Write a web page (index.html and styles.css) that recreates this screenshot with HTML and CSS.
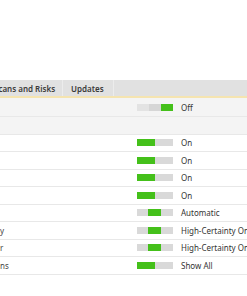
FILE: index.html
```html
<!DOCTYPE html>
<html lang="en">
<head>
    <meta charset="UTF-8">
    <meta name="viewport" content="width=device-width, initial-scale=1.0">
    <title>Settings</title>
    <link rel="stylesheet" href="styles.css">
</head>
<body>
    <div class="top-space"></div>

    <div class="tabs">
        <div class="tab tab-first">Scans and Risks</div>
        <div class="tab">Updates</div>
        <div class="tab-rest"></div>
    </div>

    <div class="list">
        <div class="row row-shaded">
            <div class="label"></div>
            <div class="switch">
                <span class="seg seg-light"></span>
                <span class="seg seg-mid"></span>
                <span class="seg seg-on seg-right"></span>
            </div>
            <div class="value">Off</div>
        </div>
        <div class="row row-shaded">
            <div class="label"></div>
        </div>
        <div class="row">
            <div class="label"></div>
            <div class="switch"><span class="seg-left"></span></div>
            <div class="value">On</div>
        </div>
        <div class="row">
            <div class="label"></div>
            <div class="switch"><span class="seg-left"></span></div>
            <div class="value">On</div>
        </div>
        <div class="row">
            <div class="label"></div>
            <div class="switch"><span class="seg-left"></span></div>
            <div class="value">On</div>
        </div>
        <div class="row">
            <div class="label"></div>
            <div class="switch"><span class="seg-left"></span></div>
            <div class="value">On</div>
        </div>
        <div class="row">
            <div class="label"></div>
            <div class="switch"><span class="seg-middle"></span></div>
            <div class="value">Automatic</div>
        </div>
        <div class="row">
            <div class="label">y</div>
            <div class="switch"><span class="seg-middle"></span></div>
            <div class="value">High-Certainty Only</div>
        </div>
        <div class="row">
            <div class="label">r</div>
            <div class="switch"><span class="seg-middle"></span></div>
            <div class="value">High-Certainty Only</div>
        </div>
        <div class="row">
            <div class="label">ns</div>
            <div class="switch"><span class="seg-left"></span></div>
            <div class="value">Show All</div>
        </div>
    </div>
</body>
</html>
```

FILE: styles.css
```css
body {
    margin: 0;
    font-family: "Noto Sans", "Open Sans", sans-serif;
    font-size: 8px;
    color: #333;
    background: #fff;
    overflow: hidden;
}
.top-space {
    height: 80px;
}
.tabs {
    display: flex;
    height: 16px;
    background: #e1e1e1;
    border-bottom: 2px solid #f5e4b0;
}
.tab {
    display: flex;
    align-items: center;
    flex-shrink: 0;
    padding: 0 9px 0 8px;
    font-weight: 600;
    color: #3a3a3a;
    border-right: 1px solid #ececec;
}
.tab-first {
    margin-left: -6px;
    padding-left: 0;
    padding-right: 7px;
}
.tab-rest {
    flex: 1;
}
.row {
    display: flex;
    align-items: center;
    height: 17.5px;
    box-sizing: border-box;
    border-bottom: 1px solid #e8e8e8;
}
.row-shaded {
    background: #f4f4f4;
}
.row-shaded:first-child {
    height: 19px;
}
.label {
    flex-shrink: 0;
    width: 137px;
    box-sizing: border-box;
    color: #444;
}
.switch {
    display: flex;
    flex-shrink: 0;
    width: 36px;
    height: 7px;
    background: #d9d9d9;
}
.seg {
    width: 12px;
    height: 7px;
}
.seg-light {
    background: #e3e3e3;
}
.seg-mid {
    background: #d6d6d6;
}
.seg-on {
    background: #44c01a;
}
.seg-left {
    width: 18px;
    height: 7px;
    background: #44c01a;
}
.seg-middle {
    width: 13px;
    height: 7px;
    margin-left: 11px;
    background: #44c01a;
}
.value {
    flex-shrink: 0;
    margin-left: 8px;
    white-space: nowrap;
}
```
